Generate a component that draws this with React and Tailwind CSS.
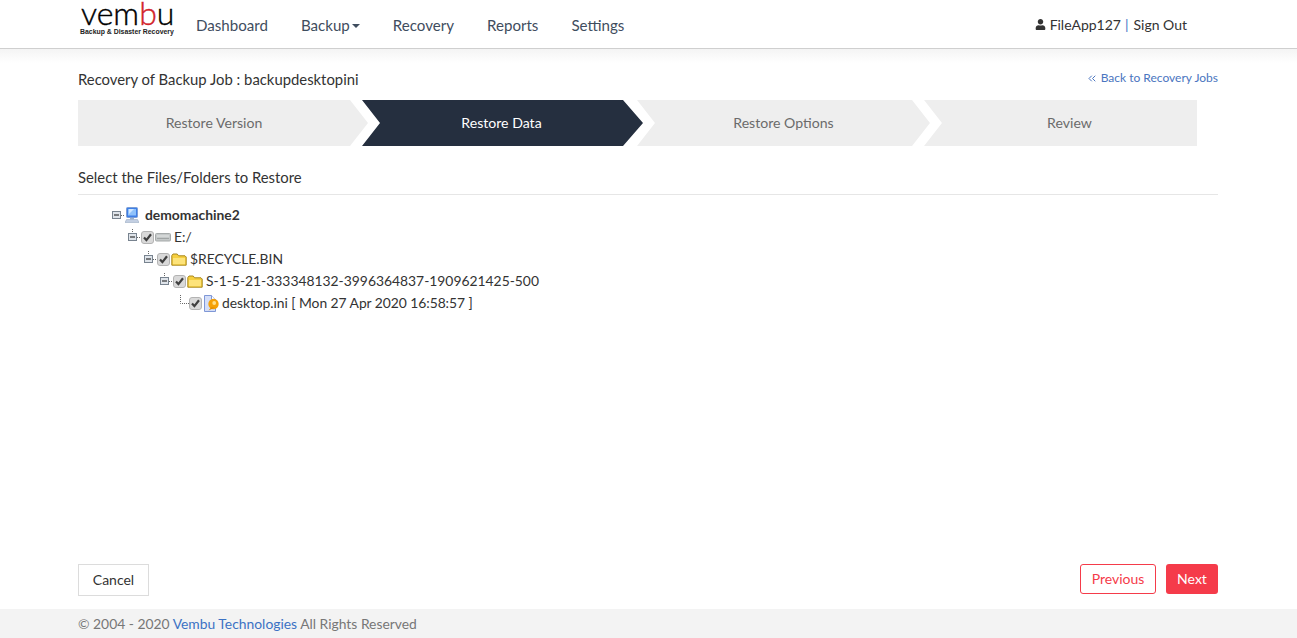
import { FaUser } from "react-icons/fa";
import { ChevronsLeft } from "lucide-react";

const steps = [
  { label: "Restore Version", cls: "w-[290px] pr-[18px] [clip-path:polygon(0_0,272px_0,100%_50%,272px_100%,0_100%)]" },
  { label: "Restore Data", active: true, cls: "w-[281px] -ml-[6px] pl-[18px] pr-[20px] [clip-path:polygon(0_0,261px_0,100%_50%,261px_100%,0_100%,18px_50%)]" },
  { label: "Restore Options", cls: "w-[293px] -ml-[6px] pl-[18px] pr-[18px] [clip-path:polygon(0_0,275px_0,100%_50%,275px_100%,0_100%,18px_50%)]" },
  { label: "Review", cls: "w-[273px] -ml-[6px] pl-[18px] [clip-path:polygon(0_0,100%_0,100%_100%,0_100%,18px_50%)]" },
];

function Expander({ line = true }) {
  return (
    <svg width="13" height="16" viewBox="0 0 13 16" className="shrink-0">
      {line && <path d="M4.5 0v4" stroke="#666" strokeDasharray="1 1" />}
      <rect x="0.5" y="4.5" width="8" height="7" fill="#dfe4ea" stroke="#78838f" />
      <path d="M2 8h5" stroke="#111" />
      <path d="M9 8.5h4" stroke="#666" strokeDasharray="1 1" />
    </svg>
  );
}

function Check() {
  return (
    <svg width="13" height="13" viewBox="0 0 13 13" className="shrink-0">
      <rect x="0.5" y="0.5" width="12" height="12" rx="2.5" fill="#d9d9d9" stroke="#b3b3b3" />
      <path d="M3 6.5l2.4 2.6L10 3.2" fill="none" stroke="#3f3f3f" strokeWidth="2.2" />
    </svg>
  );
}

function Computer() {
  return (
    <svg width="14" height="16" viewBox="0 0 14 16" className="shrink-0">
      <rect x="1.5" y="0.5" width="11" height="10" rx="1" fill="#3f7fe6" stroke="#7d9fd6" />
      <rect x="3" y="2" width="8" height="6.5" fill="#8fc2fb" />
      <path d="M4 2h5L4 7z" fill="#cfe6ff" />
      <path d="M5 11h4v1.5H5z" fill="#9fb3cc" />
      <path d="M1.5 12.5h11l1.5 3H0z" fill="#c3cfe2" stroke="#8ea2bd" strokeWidth="0.5" />
    </svg>
  );
}

function Drive() {
  return (
    <svg width="16" height="10" viewBox="0 0 16 10" className="shrink-0">
      <rect x="0.5" y="1.5" width="15" height="7.5" rx="1" fill="#c4c8c8" stroke="#a6aaaa" />
      <path d="M2 4h12" stroke="#e4e6e6" />
      <path d="M2 6.5h12" stroke="#a0a4a4" />
    </svg>
  );
}

function Folder() {
  return (
    <svg width="16" height="13" viewBox="0 0 16 13" className="shrink-0">
      <path d="M0.8 12.2V2.6L2 1h4.2l1.4 1.8H14l1.2 1.2v8.2z" fill="#f6cf3f" stroke="#a9881f" />
      <path d="M2 5h12v6.2H2z" fill="#fde37a" />
    </svg>
  );
}

function IniFile() {
  return (
    <svg width="16" height="17" viewBox="0 0 16 17" className="shrink-0">
      <path d="M1.5 0.5h7l4 4v12h-11z" fill="#d4def8" stroke="#7f97d6" />
      <path d="M8.5 0.5v4h4" fill="#fff" stroke="#7f97d6" />
      <circle cx="10.5" cy="9" r="5.2" fill="#f5a108" />
      <path d="M5.5 15.5l2.5-3h4z" fill="#e08a00" />
      <circle cx="11.2" cy="8" r="1.9" fill="#ffe08a" />
    </svg>
  );
}

function TreeRow({ indent, children }) {
  return (
    <div className={`flex h-[22px] items-center ${indent}`}>
      {children}
    </div>
  );
}

export default function App() {
  return (
    <div className="flex h-[638px] flex-col bg-white font-['Lato','Liberation_Sans',sans-serif] text-[#333]">
      {/* top nav */}
      <header className="flex h-[49px] shrink-0 items-center border-b border-[#cfcfcf] bg-white pl-[80px] pr-[110px] shadow-[0_1px_6px_rgba(0,0,0,0.14)]">
        <div className="w-[95px] shrink-0 select-none self-start">
          <div className="flex h-[26px] items-end pl-[1px] text-[32px] leading-[26px] font-light text-black [-webkit-text-stroke:0.4px]">
            vem<span className="text-[#d2232a]">b</span>u
          </div>
          <div className="mt-[1px] whitespace-nowrap text-[6.9px] leading-[9px] font-bold text-[#222] font-['Liberation_Sans',sans-serif]">Backup &amp; Disaster Recovery</div>
        </div>
        <nav className="ml-[21px] mt-[2px] flex items-center gap-[33px] text-[15.1px] text-[#3f4d5e]">
          <span>Dashboard</span>
          <span className="flex items-center">
            Backup
            <span className="ml-[2px] mt-[2px] h-0 w-0 border-x-[4px] border-t-[4px] border-x-transparent border-t-[#3f4d5e]" />
          </span>
          <span>Recovery</span>
          <span>Reports</span>
          <span>Settings</span>
        </nav>
        <div className="ml-auto mt-[1px] flex items-center text-[14px] text-[#333]">
          <FaUser className="mr-[4px] h-[11px] w-[11px]" />
          <span>FileApp127</span>
          <span className="ml-[4px] mr-[5px] text-[#3c77c4]">|</span>
          <span>Sign Out</span>
        </div>
      </header>

      <main className="flex-1 bg-[linear-gradient(#f4f4f4,#fff_14px)] pl-[78px] pr-[79px]">
        <div className="flex h-[51px] items-end justify-between pb-[11px]">
          <h1 className="text-[14.85px] leading-[20px] font-normal">Recovery of Backup Job : backupdesktopini</h1>
          <a className="mb-[2px] flex items-center text-[12px] text-[#4a75c0]">
            <ChevronsLeft className="mr-[3px] h-[13px] w-[12px]" strokeWidth={2} />
            Back to Recovery Jobs
          </a>
        </div>

        <div className="flex h-[46px]">
          {steps.map((s) => (
            <div
              key={s.label}
              className={`flex items-center justify-center pb-[1px] text-[14.1px] ${s.cls} ${s.active ? "bg-[#252f3f] text-white" : "bg-[#eeeeee] text-[#6b6b6b]"}`}
            >
              {s.label}
            </div>
          ))}
        </div>

        <div className="mt-[21px] border-b border-[#e6e6e6] pb-[7px] text-[14.85px] leading-[20px]">
          Select the Files/Folders to Restore
        </div>

        <div className="mt-[9px] text-[13.87px] text-[#333]">
          <TreeRow indent="pl-[34px]">
            <Expander line={false} />
            <Computer />
            <span className="ml-[6px] font-bold">demomachine2</span>
          </TreeRow>
          <TreeRow indent="pl-[50px]">
            <Expander />
            <Check />
            <span className="ml-[1px]"><Drive /></span>
            <span className="ml-[3px]">E:/</span>
          </TreeRow>
          <TreeRow indent="pl-[66px]">
            <Expander />
            <Check />
            <span className="ml-[1px]"><Folder /></span>
            <span className="ml-[3px]">$RECYCLE.BIN</span>
          </TreeRow>
          <TreeRow indent="pl-[82px]">
            <Expander />
            <Check />
            <span className="ml-[1px]"><Folder /></span>
            <span className="ml-[3px]">S-1-5-21-333348132-3996364837-1909621425-500</span>
          </TreeRow>
          <TreeRow indent="pl-[102px]">
            <svg width="9" height="16" viewBox="0 0 9 16" className="shrink-0">
              <path d="M0.5 0v8.5H9" fill="none" stroke="#666" strokeDasharray="1 1" />
            </svg>
            <Check />
            <span className="ml-[1px]"><IniFile /></span>
            <span className="ml-[3px] tracking-[-0.05px]">desktop.ini [ Mon 27 Apr 2020 16:58:57 ]</span>
          </TreeRow>
        </div>
      </main>

      <div className="flex h-[45px] shrink-0 items-start justify-between bg-white pl-[78px] pr-[79px] text-[14px]">
        <button className="h-[32px] w-[71px] border border-[#dcdcdc] bg-white pb-[2px] text-[#333]">Cancel</button>
        <div className="flex gap-[10px]">
          <button className="h-[30px] w-[76px] rounded-[3px] border border-[#f53b4a] bg-white pb-[2px] text-[#f53b4a]">Previous</button>
          <button className="h-[30px] w-[52px] rounded-[3px] bg-[#f53b4a] pb-[2px] text-white">Next</button>
        </div>
      </div>

      <footer className="flex h-[29px] shrink-0 items-center bg-[#f3f3f3] pl-[78px] pt-[1px] text-[13.87px] text-[#777]">
        <span>© 2004 - 2020 <span className="text-[#3c72c4]">Vembu Technologies</span> All Rights Reserved</span>
      </footer>
    </div>
  );
}
